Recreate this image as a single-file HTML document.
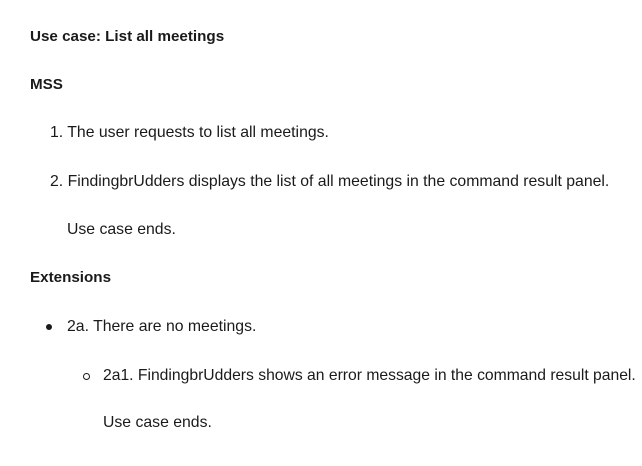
<!DOCTYPE html>
<html><head><meta charset="utf-8"><style>
html,body{margin:0;padding:0;background:#fff;width:642px;height:466px;overflow:hidden}
body{font-family:"Liberation Sans",sans-serif;font-size:15.8px;color:#1a1a1a;position:relative}
.l{position:absolute;white-space:nowrap;line-height:20px}
b{font-weight:bold;font-size:15.2px}
.dot{position:absolute;width:6px;height:6px;border-radius:50%;background:#1a1a1a}
.ring{position:absolute;width:5px;height:5px;border-radius:50%;border:1.3px solid #1a1a1a}
</style></head><body>
<div class="l" style="left:30px;top:27px"><b>Use case: List all meetings</b></div>
<div class="l" style="left:30px;top:75px"><b>MSS</b></div>
<div class="l" style="left:50px;top:123px">1. The user requests to list all meetings.</div>
<div class="l" style="left:50px;top:172px">2. FindingbrUdders displays the list of all meetings in the command result panel.</div>
<div class="l" style="left:67px;top:220px">Use case ends.</div>
<div class="l" style="left:30px;top:268px"><b>Extensions</b></div>
<div class="dot" style="left:46px;top:324px"></div>
<div class="l" style="left:67px;top:317px">2a. There are no meetings.</div>
<div class="ring" style="left:83px;top:373px"></div>
<div class="l" style="left:103px;top:366px;font-size:15.7px">2a1. FindingbrUdders shows an error message in the command result panel.</div>
<div class="l" style="left:103px;top:413px">Use case ends.</div>
</body></html>
